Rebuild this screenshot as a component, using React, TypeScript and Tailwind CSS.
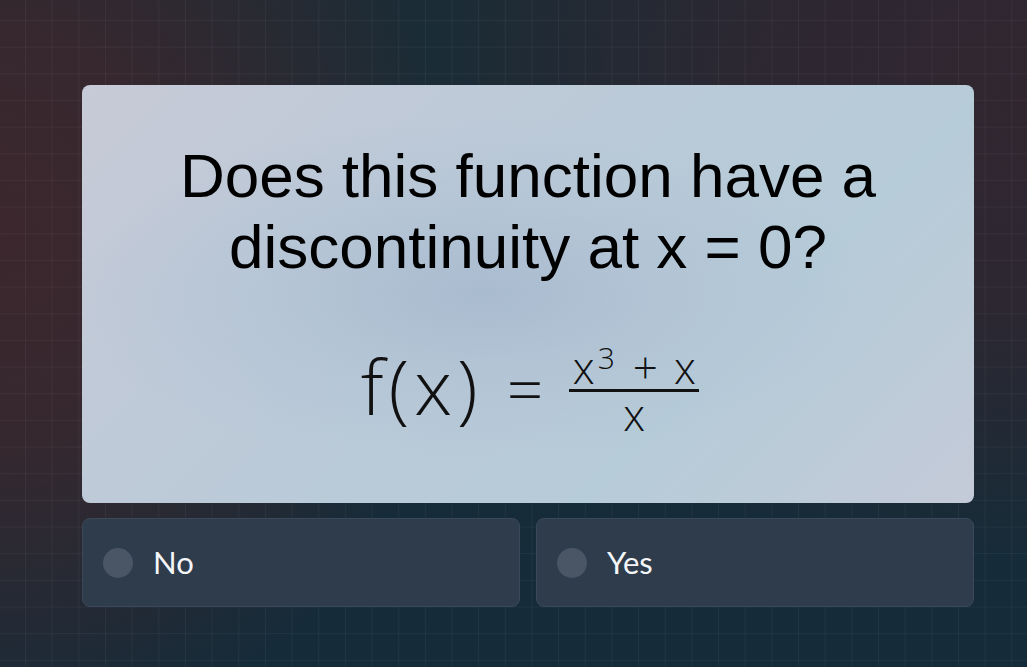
import React, { useState } from "react";

const options = ["No", "Yes"];

function Radio({ label, selected, onSelect }: { label: string; selected: boolean; onSelect: () => void }) {
  return (
    <button
      type="button"
      onClick={onSelect}
      className="flex h-[89px] flex-1 items-center gap-5 rounded-lg border border-[#3b4859] bg-[#2f3c4c] pl-[20px] text-left"
    >
      <span
        className={
          selected
            ? "h-[30px] w-[30px] rounded-full border-[8px] border-[#4a5566] bg-white"
            : "h-[30px] w-[30px] rounded-full bg-[#4a5566]"
        }
      />
      <span className="font-['Lato',sans-serif] text-[31px] leading-none text-[#f4f6f8]">{label}</span>
    </button>
  );
}

function App() {
  const [answer, setAnswer] = useState<string | null>(null);

  return (
    <div className="h-screen w-full overflow-hidden bg-[#162b37] bg-[linear-gradient(rgba(255,255,255,0.045)_1px,transparent_1px),linear-gradient(90deg,rgba(255,255,255,0.045)_1px,transparent_1px),radial-gradient(ellipse_460px_520px_at_0%_35%,#3b272d_0%,rgba(59,39,45,0.85)_40%,transparent_100%),radial-gradient(ellipse_600px_460px_at_100%_15%,#312630_0%,rgba(49,38,48,0.8)_45%,transparent_100%),linear-gradient(180deg,#1b2c36_0%,#172c38_60%,#152b39_100%)] bg-[size:26.67px_26.67px,26.67px_26.67px,100%_100%,100%_100%,100%_100%] bg-[position:-1.67px_20px,-1.67px_20px,0_0,0_0,0_0] pl-[82px] pt-[85px]">
      <div className="flex w-[892px] flex-col gap-[15px]">
        <div className="flex h-[418px] flex-col items-center rounded-lg bg-[#bccad8] bg-[radial-gradient(ellipse_at_45%_50%,#a9bbcf_0%,rgba(176,194,212,0.6)_30%,transparent_60%),linear-gradient(135deg,#c7cad7_0%,#bccad8_40%,#b6ccd8_70%,#c4cad8_100%)] pt-[55px]">
          <h1 className="text-center font-['Liberation_Sans',Arial,sans-serif] text-[62px] leading-[71px] text-black">
            Does this function have a
            <br />
            discontinuity at x = 0?
          </h1>
          <div className="mt-[63px] flex items-center font-['Open_Sans',sans-serif] font-light text-[#111]">
            <span className="ml-[4px] -translate-y-[5px] text-[76px] leading-none tracking-[5px]">f(x)</span>
            <span className="ml-[24px] -translate-y-[2px] text-[64px] leading-none">=</span>
            <div className="ml-[26px] flex flex-col items-center">
              <span className="flex items-baseline text-[44px] leading-[44px]">
                <span>x</span>
                <sup className="ml-[3px] text-[30px]">3</sup>
                <span className="ml-[18px]">+</span>
                <span className="ml-[16px]">x</span>
              </span>
              <span className="h-[3px] w-[130px] bg-[#111]" />
              <span className="text-[44px] leading-[44px]">x</span>
            </div>
          </div>
        </div>
        <div className="flex gap-4">
          {options.map((o) => (
            <Radio key={o} label={o} selected={answer === o} onSelect={() => setAnswer(o)} />
          ))}
        </div>
      </div>
    </div>
  );
}

export default App;
